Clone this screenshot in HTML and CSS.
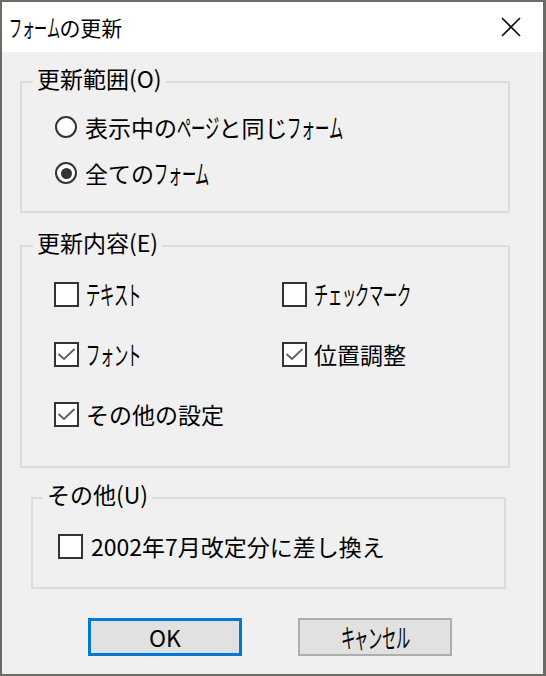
FILE: index.html
```html
<!DOCTYPE html>
<html lang="ja">
<head>
<meta charset="utf-8">
<title>フォームの更新</title>
<link rel="stylesheet" href="styles.css">
</head>
<body>
<div class="window">
  <div class="titlebar">
    <div class="title"><span class="k"><i>フ</i><i>ォ</i><i>ー</i><i>ム</i></span>の更新</div>
    <div class="close">
      <svg viewBox="0 0 20 20" aria-hidden="true"><path d="M1 1L19 19M19 1L1 19"/></svg>
    </div>
  </div>
  <div class="client">
    <fieldset class="group g1">
      <legend>更新範囲(O)</legend>
      <div class="body">
        <div class="opt"><span class="radio"></span><span class="label">表示中の<span class="k"><i>ペ</i><i>ー</i><i>ジ</i></span>と同じ<span class="k"><i>フ</i><i>ォ</i><i>ー</i><i>ム</i></span></span></div>
        <div class="opt"><span class="radio on"></span><span class="label">全ての<span class="k"><i>フ</i><i>ォ</i><i>ー</i><i>ム</i></span></span></div>
      </div>
    </fieldset>

    <fieldset class="group g2">
      <legend>更新内容(E)</legend>
      <div class="body grid">
        <div class="opt"><span class="cb"></span><span class="label k"><i>テ</i><i>キ</i><i>ス</i><i>ト</i></span></div>
        <div class="opt"><span class="cb"></span><span class="label k"><i>チ</i><i>ェ</i><i>ッ</i><i>ク</i><i>マ</i><i>ー</i><i>ク</i></span></div>
        <div class="opt"><span class="cb"><svg viewBox="0 0 21 21" aria-hidden="true"><polyline points="2.5,10 8,15 18.5,5"/></svg></span><span class="label k"><i>フ</i><i>ォ</i><i>ン</i><i>ト</i></span></div>
        <div class="opt"><span class="cb"><svg viewBox="0 0 21 21" aria-hidden="true"><polyline points="2.5,10 8,15 18.5,5"/></svg></span><span class="label">位置調整</span></div>
        <div class="opt"><span class="cb"><svg viewBox="0 0 21 21" aria-hidden="true"><polyline points="2.5,10 8,15 18.5,5"/></svg></span><span class="label">その他の設定</span></div>
      </div>
    </fieldset>

    <fieldset class="group g3">
      <legend>その他(U)</legend>
      <div class="body">
        <div class="opt"><span class="cb"></span><span class="label">2002年7月改定分に差し換え</span></div>
      </div>
    </fieldset>

    <div class="buttons">
      <button class="btn default" type="button">OK</button>
      <button class="btn" type="button"><span class="k"><i>キ</i><i>ャ</i><i>ン</i><i>セ</i><i>ル</i></span></button>
    </div>
  </div>
</div>
</body>
</html>
```

FILE: styles.css
```css
html {
  background: #6a6d66;
}

body {
  margin: 0;
  padding: 2px 0 0 2px;
  font-family: "Noto Sans CJK JP", "Noto Sans", sans-serif;
  color: #000;
}

.window {
  width: 541px;
  height: 672px;
  background: #f0f0f0;
  box-sizing: border-box;
}

.titlebar {
  height: 50px;
  background: #fff;
  display: flex;
  align-items: center;
  justify-content: space-between;
}

.title {
  padding-left: 7px;
  font-size: 21px;
  line-height: 28px;
  white-space: nowrap;
}

.close {
  width: 64px;
  height: 50px;
  display: flex;
  align-items: center;
  justify-content: center;
}

.close svg {
  width: 20px;
  height: 20px;
  fill: none;
  stroke: #111;
  stroke-width: 1.7;
}

/* narrow, tall katakana, as in the dialog's proportional UI font */
.k i {
  font-style: normal;
  display: inline-block;
  width: 0.6em;
  transform: scale(0.62, 1.15);
  transform-origin: 0 58%;
}

.client {
  padding-top: 12px;
  font-size: 23px;
  line-height: 28px;
}

.group {
  margin: 0 0 0 18px;
  padding: 0;
  border: 2px solid #dcdcdc;
  min-width: 0;
  box-sizing: border-box;
}

.group legend {
  margin-left: 11px;
  padding: 0 4px 8px;
  line-height: 28px;
}

.g1 {
  width: 490px;
}

.g1 .body {
  padding: 4px 0 15px 33px;
}

.g1 .opt {
  height: 46px;
}

.g2 {
  width: 490px;
  margin-top: 15px;
}

.g2 .body {
  padding: 0 0 22px 32px;
}

.g3 {
  width: 475px;
  margin: 12px 0 0 29px;
}

.g3 legend {
  margin-left: 10px;
}

.g3 .body {
  padding: 0 0 11px 25px;
}

.grid {
  display: grid;
  grid-template-columns: 228px 1fr;
  grid-auto-rows: 60px;
}

.opt {
  display: flex;
  align-items: center;
  height: 60px;
  white-space: nowrap;
}

.radio {
  width: 22px;
  height: 22px;
  box-sizing: border-box;
  border: 2px solid #333;
  border-radius: 50%;
  background: #fff;
  display: flex;
  align-items: center;
  justify-content: center;
  flex: none;
}

.radio.on::after {
  content: "";
  width: 11px;
  height: 11px;
  border-radius: 50%;
  background: #333;
}

.radio + .label {
  margin-left: 8px;
}

.cb {
  width: 25px;
  height: 25px;
  box-sizing: border-box;
  border: 2px solid #333;
  background: #fff;
  flex: none;
  display: flex;
}

.cb svg {
  width: 21px;
  height: 21px;
  fill: none;
  stroke: #5f5f5f;
  stroke-width: 1.8;
}

.cb + .label {
  margin-left: 7px;
}

.g3 .cb + .label {
  margin-left: 8px;
}

.buttons {
  display: flex;
  gap: 56px;
  margin: 29px 0 0 86px;
}

.btn {
  width: 154px;
  height: 38px;
  box-sizing: border-box;
  border: 2px solid #adadad;
  background: #e1e1e1;
  font-family: inherit;
  font-size: 23px;
  line-height: 28px;
  color: #000;
  padding: 0;
  display: flex;
  align-items: center;
  justify-content: center;
  white-space: nowrap;
}

.btn.default {
  border: 3px solid #0078d7;
}
```
